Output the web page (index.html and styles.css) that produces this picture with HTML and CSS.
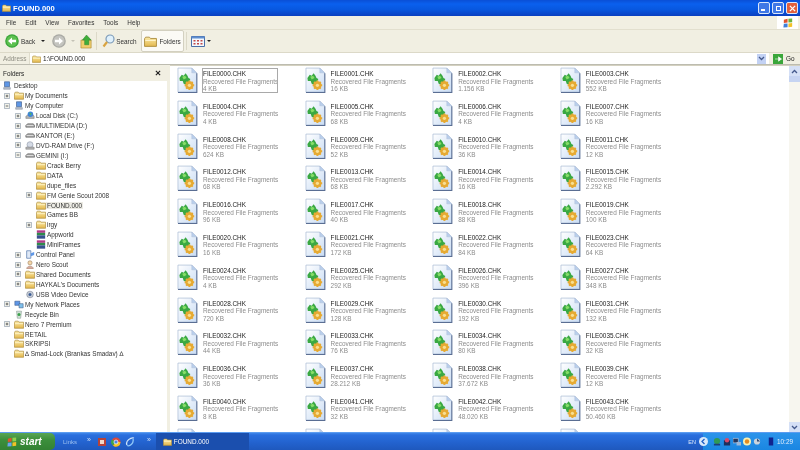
FILE: index.html
```html
<!DOCTYPE html>
<html lang="en">
<head>
<meta charset="utf-8">
<title>FOUND.000</title>
<link rel="stylesheet" href="styles.css">
</head>
<body>
<svg class="defs" width="0" height="0" aria-hidden="true">
  <defs>
    <linearGradient id="pg" x1="0" y1="0" x2="1" y2="1"><stop offset="0" stop-color="#ffffff"/><stop offset="1" stop-color="#c9dcf4"/></linearGradient>
    <linearGradient id="fd" x1="0" y1="0" x2="0" y2="1"><stop offset="0" stop-color="#fbe9a6"/><stop offset="1" stop-color="#e3b84e"/></linearGradient>
    <symbol id="chk" viewBox="0 0 22 27">
      <path d="M1 .5H15.500L20.500 5.500V25.500H1Z" fill="url(#pg)" stroke="#a4b5d0" stroke-width=".7"/>
      <path d="M15.500 .5V5.500H20.500Z" fill="#b9cfec" stroke="#a4b5d0" stroke-width=".4"/>
      <path d="M20.800 6V26H1" fill="none" stroke="#5a6e93" stroke-width="1.100"/>
      <path d="M2.500 11L5 7.500L7 8.500L9 6L11 8.500L12 11L14 12L12.500 15L10 15L9.500 18L7 17L6 14L3 14Z" fill="#3aa843"/>
      <path d="M5.500 9.500L8.500 8.500L10 11L7 12.500Z" fill="#86de68"/>
      <circle cx="13" cy="18.500" r="4.200" fill="#e6aa33"/>
      <path d="M13 13.500V23.500M8 18.500H18M9.500 15L16.500 22M16.500 15L9.500 22" stroke="#e6aa33" stroke-width="2"/>
      <circle cx="13" cy="18.500" r="1.700" fill="#f8df92"/>
    </symbol>
    <symbol id="folder" viewBox="0 0 12 10">
      <path d="M.5 2.500L1.500 1H5L6 2.200H11.500V9.500H.5Z" fill="url(#fd)" stroke="#a98a3a" stroke-width=".8"/>
      <path d="M1.200 4H10.800" stroke="#fff5cc" stroke-width="1"/>
    </symbol>
    <symbol id="drive" viewBox="0 0 12 10">
      <path d="M1 5L3 3H10L11.500 5V7H1Z" fill="#a8a8a8" stroke="#555" stroke-width=".7"/>
      <path d="M2 5H10" stroke="#e4e4e4"/>
    </symbol>
    <symbol id="disc" viewBox="0 0 12 10">
      <circle cx="6" cy="4" r="3.600" fill="#d5dbe6" stroke="#7a8496" stroke-width=".6"/>
      <path d="M1 7H11V9.500H1Z" fill="#b4b4b4" stroke="#666" stroke-width=".5"/>
    </symbol>
    <symbol id="globe" viewBox="0 0 12 10">
      <path d="M1 6L3 4.500H10L11 6V8.500H1Z" fill="#b3b3b3" stroke="#666" stroke-width=".5"/>
      <circle cx="6.500" cy="3.500" r="3.300" fill="#3f86d8"/>
      <path d="M5 1.500L8 2.500L6.500 5Z" fill="#53b85a"/>
    </symbol>
    <symbol id="pc" viewBox="0 0 12 10">
      <path d="M3 .5H9V6.500H3Z" fill="#5f97e6" stroke="#33517f" stroke-width=".7"/>
      <path d="M2 7.500H10V9.500H2Z" fill="#b9c2d0" stroke="#6a7486" stroke-width=".5"/>
    </symbol>
    <symbol id="books" viewBox="0 0 12 10">
      <path d="M1 0H11V3H1Z" fill="#b13a8a"/><path d="M1 3H11V6H1Z" fill="#2f8a4c"/><path d="M1 6H11V10H1Z" fill="#37518f"/>
    </symbol>
    <symbol id="bin" viewBox="0 0 12 10">
      <path d="M3 1H9L8 9.500H4Z" fill="#cfe0d4" stroke="#7d8f86" stroke-width=".6"/><circle cx="6" cy="5" r="1.800" fill="#3aa04a"/>
    </symbol>
    <symbol id="cam" viewBox="0 0 12 10">
      <circle cx="6" cy="5" r="4" fill="#c6ccd6" stroke="#6c7788" stroke-width=".6"/><circle cx="6" cy="5" r="1.800" fill="#3e5f96"/>
    </symbol>
    <symbol id="panel" viewBox="0 0 12 10">
      <path d="M2 .5H7V9.500H2Z" fill="#dfe9f7" stroke="#4a6fa8" stroke-width=".8"/><path d="M7 3.500L11 2V5.500L7 7Z" fill="#5f97e6"/>
    </symbol>
    <symbol id="person" viewBox="0 0 12 10">
      <circle cx="6" cy="3" r="2.500" fill="#f3d6a8" stroke="#8a6a4a" stroke-width=".6"/><path d="M2 10C2 6 10 6 10 10Z" fill="#d9a9a0" stroke="#8a6a4a" stroke-width=".5"/>
    </symbol>
    <symbol id="net" viewBox="0 0 12 10">
      <path d="M1 1H7V6H1Z" fill="#5f97e6" stroke="#33517f" stroke-width=".6"/><path d="M6 4H11V9H6Z" fill="#7fc0ea" stroke="#33517f" stroke-width=".6"/>
    </symbol>
    <symbol id="plus" viewBox="0 0 7 7">
      <path d="M.5 .5H6.500V6.500H.5Z" fill="#f2f2ea" stroke="#a3adb9"/><path d="M2 3.500H5M3.500 2V5" stroke="#444" stroke-width=".9"/>
    </symbol>
    <symbol id="minus" viewBox="0 0 7 7">
      <path d="M.5 .5H6.500V6.500H.5Z" fill="#f2f2ea" stroke="#a3adb9"/><path d="M2 3.500H5" stroke="#444" stroke-width=".9"/>
    </symbol>
  </defs>
</svg>

<div class="window">
  <header class="titlebar">
    <svg class="title-icon"><use href="#folder"/></svg>
    <span class="title-text">FOUND.000</span>
    <div class="winbtns">
      <span class="winbtn"><i class="glyph-min"></i></span>
      <span class="winbtn"><i class="glyph-max"></i></span>
      <span class="winbtn close">
        <svg viewBox="0 0 8 8" class="glyph-x"><path d="M1 1L7 7M7 1L1 7" stroke="#fff" stroke-width="1.500"/></svg>
      </span>
    </div>
  </header>

  <nav class="menubar">
    <span class="menu">File</span><span class="menu">Edit</span><span class="menu">View</span><span class="menu">Favorites</span><span class="menu">Tools</span><span class="menu">Help</span>
    <span class="winflag">
      <svg viewBox="0 0 12 12" class="flag"><path d="M1 2L5.500 1V5.500L1 6Z" fill="#e0532c"/><path d="M6.500 1L11 .5V5L6.500 5.500Z" fill="#6cb33f"/><path d="M1 7L5.500 6.500V11L.5 11.500Z" fill="#3f7fd8"/><path d="M6.500 6.500L11 6V10.500L6.500 11Z" fill="#f2c227"/></svg>
    </span>
  </nav>

  <div class="toolbar">
    <svg viewBox="0 0 14 14" class="tb-round"><circle cx="7" cy="7" r="6.800" fill="#3aa63a"/><circle cx="7" cy="7" r="5.500" fill="#5cc04f"/><path d="M3 7L7 3.500V5.800H11V8.200H7V10.500Z" fill="#fff"/></svg>
    <span class="tb-label back-label">Back</span>
    <i class="caret caret-back"></i>
    <svg viewBox="0 0 14 14" class="tb-round fwd"><circle cx="7" cy="7" r="6.800" fill="#a9a9a4"/><circle cx="7" cy="7" r="5.500" fill="#c4c4bf"/><path d="M11 7L7 3.500V5.800H3V8.200H7V10.500Z" fill="#fff"/></svg>
    <i class="caret caret-fwd"></i>
    <svg viewBox="0 0 14 15" class="tb-up"><path d="M1 6H12V14.500H1Z" fill="#f0cf6c" stroke="#b08d35" stroke-width=".7"/><path d="M7 .5L12 6H9.500V11H5V6H2.500Z" fill="#3fae3a" stroke="#2c7f2a" stroke-width=".5"/></svg>
    <span class="tb-sep sep-a"></span>
    <svg viewBox="0 0 13 14" class="tb-search"><circle cx="8" cy="5" r="4" fill="#dff0fb" stroke="#7d9bb8" stroke-width="1.200"/><path d="M5 8L1.500 12.500" stroke="#d9a441" stroke-width="2.200"/></svg>
    <span class="tb-label search-label">Search</span>
    <div class="folders-btn">
      <svg class="folders-icon"><use href="#folder"/></svg>
      <span class="tb-label">Folders</span>
    </div>
    <span class="tb-sep sep-b"></span>
    <svg viewBox="0 0 14 11" class="tb-views"><path d="M.5 .5H13.500V10.500H.5Z" fill="#f4f8fd" stroke="#4a6fa8"/><path d="M.5 .5H13.500V2.500H.5Z" fill="#5f8fd0"/><path d="M2.500 4H4.500V5.500H2.500ZM6 4H8V5.500H6ZM9.500 4H11.500V5.500H9.500ZM2.500 7H4.500V8.500H2.500ZM6 7H8V8.500H6ZM9.500 7H11.500V8.500H9.500Z" fill="#c24a4a"/></svg>
    <i class="caret caret-views"></i>
  </div>

  <div class="addressbar">
    <span class="addr-label">Address</span>
    <div class="addr-field">
      <svg class="addr-icon"><use href="#folder"/></svg>
      <span class="addr-text">1:\FOUND.000</span>
      <span class="addr-drop"><svg viewBox="0 0 7 5" class="chev"><path d="M1 1L3.500 3.500L6 1" fill="none" stroke="#44598c" stroke-width="1.300"/></svg></span>
    </div>
    <svg viewBox="0 0 10 10" class="go-icon"><path d="M0 0H10V10H0Z" fill="#3aa63a"/><path d="M2 5H5.500V2.800L8.500 5L5.500 7.200V5" fill="#fff" stroke="#fff" stroke-width=".6"/></svg>
    <span class="go-text">Go</span>
  </div>

  <main class="content">
    <aside class="tree">
      <div class="tree-head"><span>Folders</span><svg viewBox="0 0 7 7" class="tree-close"><path d="M1 1L6 6M6 1L1 6" stroke="#222" stroke-width="1.300"/></svg></div>
      <div class="tree-body">
        <div class="node d0"><svg class="ni"><use href="#pc"/></svg><span>Desktop</span></div>
        <div class="node d1"><svg class="ex"><use href="#plus"/></svg><svg class="ni"><use href="#folder"/></svg><span>My Documents</span></div>
        <div class="node d1"><svg class="ex"><use href="#minus"/></svg><svg class="ni"><use href="#pc"/></svg><span>My Computer</span></div>
        <div class="node d2"><svg class="ex"><use href="#plus"/></svg><svg class="ni"><use href="#globe"/></svg><span>Local Disk (C:)</span></div>
        <div class="node d2"><svg class="ex"><use href="#plus"/></svg><svg class="ni"><use href="#drive"/></svg><span>MULTIMEDIA (D:)</span></div>
        <div class="node d2"><svg class="ex"><use href="#plus"/></svg><svg class="ni"><use href="#drive"/></svg><span>KANTOR (E:)</span></div>
        <div class="node d2"><svg class="ex"><use href="#plus"/></svg><svg class="ni"><use href="#disc"/></svg><span>DVD-RAM Drive (F:)</span></div>
        <div class="node d2"><svg class="ex"><use href="#minus"/></svg><svg class="ni"><use href="#drive"/></svg><span>GEMINI (I:)</span></div>
        <div class="node d3"><svg class="ni"><use href="#folder"/></svg><span>Crack Berry</span></div>
        <div class="node d3"><svg class="ni"><use href="#folder"/></svg><span>DATA</span></div>
        <div class="node d3"><svg class="ni"><use href="#folder"/></svg><span>dupe_files</span></div>
        <div class="node d3 has"><svg class="ex"><use href="#plus"/></svg><svg class="ni"><use href="#folder"/></svg><span>FM Genie Scout 2008</span></div>
        <div class="node d3"><svg class="ni"><use href="#folder"/></svg><span class="selected">FOUND.000</span></div>
        <div class="node d3"><svg class="ni"><use href="#folder"/></svg><span>Games BB</span></div>
        <div class="node d3 has"><svg class="ex"><use href="#plus"/></svg><svg class="ni"><use href="#folder"/></svg><span>irgy</span></div>
        <div class="node d3"><svg class="ni"><use href="#books"/></svg><span>Appworld</span></div>
        <div class="node d3"><svg class="ni"><use href="#books"/></svg><span>MiniFrames</span></div>
        <div class="node d2"><svg class="ex"><use href="#plus"/></svg><svg class="ni"><use href="#panel"/></svg><span>Control Panel</span></div>
        <div class="node d2"><svg class="ex"><use href="#plus"/></svg><svg class="ni"><use href="#person"/></svg><span>Nero Scout</span></div>
        <div class="node d2"><svg class="ex"><use href="#plus"/></svg><svg class="ni"><use href="#folder"/></svg><span>Shared Documents</span></div>
        <div class="node d2"><svg class="ex"><use href="#plus"/></svg><svg class="ni"><use href="#folder"/></svg><span>HAYKAL's Documents</span></div>
        <div class="node d3b"><svg class="ni"><use href="#cam"/></svg><span>USB Video Device</span></div>
        <div class="node d1"><svg class="ex"><use href="#plus"/></svg><svg class="ni"><use href="#net"/></svg><span>My Network Places</span></div>
        <div class="node d1b"><svg class="ni"><use href="#bin"/></svg><span>Recycle Bin</span></div>
        <div class="node d1"><svg class="ex"><use href="#plus"/></svg><svg class="ni"><use href="#folder"/></svg><span>Nero 7 Premium</span></div>
        <div class="node d1b"><svg class="ni"><use href="#folder"/></svg><span>RETAIL</span></div>
        <div class="node d1b"><svg class="ni"><use href="#folder"/></svg><span>SKRIPSI</span></div>
        <div class="node d1b"><svg class="ni"><use href="#folder"/></svg><span>∆ Smad-Lock (Brankas Smadav) ∆</span></div>
      </div>
    </aside>
    <div class="splitter"></div>
    <section class="files">
      <div class="file"><svg class="fi"><use href="#chk"/></svg><div class="ft focus"><b>FILE0000.CHK</b><span>Recovered File Fragments</span><span>4 KB</span></div></div>
      <div class="file"><svg class="fi"><use href="#chk"/></svg><div class="ft"><b>FILE0001.CHK</b><span>Recovered File Fragments</span><span>16 KB</span></div></div>
      <div class="file"><svg class="fi"><use href="#chk"/></svg><div class="ft"><b>FILE0002.CHK</b><span>Recovered File Fragments</span><span>1.156 KB</span></div></div>
      <div class="file"><svg class="fi"><use href="#chk"/></svg><div class="ft"><b>FILE0003.CHK</b><span>Recovered File Fragments</span><span>552 KB</span></div></div>
      <div class="file"><svg class="fi"><use href="#chk"/></svg><div class="ft"><b>FILE0004.CHK</b><span>Recovered File Fragments</span><span>4 KB</span></div></div>
      <div class="file"><svg class="fi"><use href="#chk"/></svg><div class="ft"><b>FILE0005.CHK</b><span>Recovered File Fragments</span><span>68 KB</span></div></div>
      <div class="file"><svg class="fi"><use href="#chk"/></svg><div class="ft"><b>FILE0006.CHK</b><span>Recovered File Fragments</span><span>4 KB</span></div></div>
      <div class="file"><svg class="fi"><use href="#chk"/></svg><div class="ft"><b>FILE0007.CHK</b><span>Recovered File Fragments</span><span>16 KB</span></div></div>
      <div class="file"><svg class="fi"><use href="#chk"/></svg><div class="ft"><b>FILE0008.CHK</b><span>Recovered File Fragments</span><span>624 KB</span></div></div>
      <div class="file"><svg class="fi"><use href="#chk"/></svg><div class="ft"><b>FILE0009.CHK</b><span>Recovered File Fragments</span><span>52 KB</span></div></div>
      <div class="file"><svg class="fi"><use href="#chk"/></svg><div class="ft"><b>FILE0010.CHK</b><span>Recovered File Fragments</span><span>36 KB</span></div></div>
      <div class="file"><svg class="fi"><use href="#chk"/></svg><div class="ft"><b>FILE0011.CHK</b><span>Recovered File Fragments</span><span>12 KB</span></div></div>
      <div class="file"><svg class="fi"><use href="#chk"/></svg><div class="ft"><b>FILE0012.CHK</b><span>Recovered File Fragments</span><span>68 KB</span></div></div>
      <div class="file"><svg class="fi"><use href="#chk"/></svg><div class="ft"><b>FILE0013.CHK</b><span>Recovered File Fragments</span><span>68 KB</span></div></div>
      <div class="file"><svg class="fi"><use href="#chk"/></svg><div class="ft"><b>FILE0014.CHK</b><span>Recovered File Fragments</span><span>16 KB</span></div></div>
      <div class="file"><svg class="fi"><use href="#chk"/></svg><div class="ft"><b>FILE0015.CHK</b><span>Recovered File Fragments</span><span>2.292 KB</span></div></div>
      <div class="file"><svg class="fi"><use href="#chk"/></svg><div class="ft"><b>FILE0016.CHK</b><span>Recovered File Fragments</span><span>96 KB</span></div></div>
      <div class="file"><svg class="fi"><use href="#chk"/></svg><div class="ft"><b>FILE0017.CHK</b><span>Recovered File Fragments</span><span>40 KB</span></div></div>
      <div class="file"><svg class="fi"><use href="#chk"/></svg><div class="ft"><b>FILE0018.CHK</b><span>Recovered File Fragments</span><span>88 KB</span></div></div>
      <div class="file"><svg class="fi"><use href="#chk"/></svg><div class="ft"><b>FILE0019.CHK</b><span>Recovered File Fragments</span><span>100 KB</span></div></div>
      <div class="file"><svg class="fi"><use href="#chk"/></svg><div class="ft"><b>FILE0020.CHK</b><span>Recovered File Fragments</span><span>16 KB</span></div></div>
      <div class="file"><svg class="fi"><use href="#chk"/></svg><div class="ft"><b>FILE0021.CHK</b><span>Recovered File Fragments</span><span>172 KB</span></div></div>
      <div class="file"><svg class="fi"><use href="#chk"/></svg><div class="ft"><b>FILE0022.CHK</b><span>Recovered File Fragments</span><span>84 KB</span></div></div>
      <div class="file"><svg class="fi"><use href="#chk"/></svg><div class="ft"><b>FILE0023.CHK</b><span>Recovered File Fragments</span><span>64 KB</span></div></div>
      <div class="file"><svg class="fi"><use href="#chk"/></svg><div class="ft"><b>FILE0024.CHK</b><span>Recovered File Fragments</span><span>4 KB</span></div></div>
      <div class="file"><svg class="fi"><use href="#chk"/></svg><div class="ft"><b>FILE0025.CHK</b><span>Recovered File Fragments</span><span>292 KB</span></div></div>
      <div class="file"><svg class="fi"><use href="#chk"/></svg><div class="ft"><b>FILE0026.CHK</b><span>Recovered File Fragments</span><span>396 KB</span></div></div>
      <div class="file"><svg class="fi"><use href="#chk"/></svg><div class="ft"><b>FILE0027.CHK</b><span>Recovered File Fragments</span><span>348 KB</span></div></div>
      <div class="file"><svg class="fi"><use href="#chk"/></svg><div class="ft"><b>FILE0028.CHK</b><span>Recovered File Fragments</span><span>720 KB</span></div></div>
      <div class="file"><svg class="fi"><use href="#chk"/></svg><div class="ft"><b>FILE0029.CHK</b><span>Recovered File Fragments</span><span>128 KB</span></div></div>
      <div class="file"><svg class="fi"><use href="#chk"/></svg><div class="ft"><b>FILE0030.CHK</b><span>Recovered File Fragments</span><span>192 KB</span></div></div>
      <div class="file"><svg class="fi"><use href="#chk"/></svg><div class="ft"><b>FILE0031.CHK</b><span>Recovered File Fragments</span><span>132 KB</span></div></div>
      <div class="file"><svg class="fi"><use href="#chk"/></svg><div class="ft"><b>FILE0032.CHK</b><span>Recovered File Fragments</span><span>44 KB</span></div></div>
      <div class="file"><svg class="fi"><use href="#chk"/></svg><div class="ft"><b>FILE0033.CHK</b><span>Recovered File Fragments</span><span>76 KB</span></div></div>
      <div class="file"><svg class="fi"><use href="#chk"/></svg><div class="ft"><b>FILE0034.CHK</b><span>Recovered File Fragments</span><span>80 KB</span></div></div>
      <div class="file"><svg class="fi"><use href="#chk"/></svg><div class="ft"><b>FILE0035.CHK</b><span>Recovered File Fragments</span><span>32 KB</span></div></div>
      <div class="file"><svg class="fi"><use href="#chk"/></svg><div class="ft"><b>FILE0036.CHK</b><span>Recovered File Fragments</span><span>36 KB</span></div></div>
      <div class="file"><svg class="fi"><use href="#chk"/></svg><div class="ft"><b>FILE0037.CHK</b><span>Recovered File Fragments</span><span>28.212 KB</span></div></div>
      <div class="file"><svg class="fi"><use href="#chk"/></svg><div class="ft"><b>FILE0038.CHK</b><span>Recovered File Fragments</span><span>37.672 KB</span></div></div>
      <div class="file"><svg class="fi"><use href="#chk"/></svg><div class="ft"><b>FILE0039.CHK</b><span>Recovered File Fragments</span><span>12 KB</span></div></div>
      <div class="file"><svg class="fi"><use href="#chk"/></svg><div class="ft"><b>FILE0040.CHK</b><span>Recovered File Fragments</span><span>8 KB</span></div></div>
      <div class="file"><svg class="fi"><use href="#chk"/></svg><div class="ft"><b>FILE0041.CHK</b><span>Recovered File Fragments</span><span>32 KB</span></div></div>
      <div class="file"><svg class="fi"><use href="#chk"/></svg><div class="ft"><b>FILE0042.CHK</b><span>Recovered File Fragments</span><span>48.020 KB</span></div></div>
      <div class="file"><svg class="fi"><use href="#chk"/></svg><div class="ft"><b>FILE0043.CHK</b><span>Recovered File Fragments</span><span>50.460 KB</span></div></div>
      <div class="file"><svg class="fi"><use href="#chk"/></svg><div class="ft"><b>FILE0044.CHK</b></div></div>
      <div class="file"><svg class="fi"><use href="#chk"/></svg><div class="ft"><b>FILE0045.CHK</b></div></div>
      <div class="file"><svg class="fi"><use href="#chk"/></svg><div class="ft"><b>FILE0046.CHK</b></div></div>
      <div class="file"><svg class="fi"><use href="#chk"/></svg><div class="ft"><b>FILE0047.CHK</b></div></div>
    </section>
    <div class="scrollbar">
      <span class="sb-btn"><svg viewBox="0 0 7 5" class="chev"><path d="M1 4L3.500 1.500L6 4" fill="none" stroke="#44598c" stroke-width="1.300"/></svg></span>
      <span class="sb-thumb"></span>
      <span class="sb-track"></span>
      <span class="sb-btn"><svg viewBox="0 0 7 5" class="chev"><path d="M1 1L3.500 3.500L6 1" fill="none" stroke="#44598c" stroke-width="1.300"/></svg></span>
    </div>
  </main>

  <footer class="taskbar">
    <div class="start">
      <svg viewBox="0 0 12 12" class="start-flag"><path d="M1 2L5.500 1V5.500L1 6Z" fill="#e0532c"/><path d="M6.500 1L11 .5V5L6.500 5.500Z" fill="#8fd04f"/><path d="M1 7L5.500 6.500V11L.5 11.500Z" fill="#6aa5ee"/><path d="M6.500 6.500L11 6V10.500L6.500 11Z" fill="#f2c227"/></svg>
      <span class="start-text">start</span>
    </div>
    <span class="links">Links</span>
    <span class="chevrons chev-a">»</span>
    <div class="quick">
      <svg viewBox="0 0 10 10" class="q"><path d="M1 1H9V9H1Z" fill="#b5433a"/><path d="M3 3H7V7H3Z" fill="#f0d8c8"/></svg>
      <svg viewBox="0 0 10 10" class="q"><circle cx="5" cy="5" r="4.500" fill="#d9483b"/><path d="M5 5L9.500 5A4.500 4.500 0 0 1 2 8.500Z" fill="#f2c227"/><path d="M5 5L2 8.500A4.500 4.500 0 0 1 1 2.500Z" fill="#3fa64a"/><circle cx="5" cy="5" r="2" fill="#4a86e8" stroke="#fff" stroke-width=".7"/></svg>
      <svg viewBox="0 0 10 10" class="q"><path d="M2 8C0 4 6 0 9 1" fill="none" stroke="#cfe6fb" stroke-width="1.300"/><path d="M8 2C9 6 5 10 2 8.500" fill="none" stroke="#8fc8f8" stroke-width="1.300"/></svg>
    </div>
    <span class="chevrons chev-b">»</span>
    <div class="task">
      <svg class="task-icon"><use href="#folder"/></svg>
      <span>FOUND.000</span>
    </div>
    <span class="lang">EN</span>
    <div class="tray">
      <svg viewBox="0 0 9 9" class="tray-chev"><circle cx="4.500" cy="4.500" r="4.500" fill="#d8e9fb"/><path d="M5.500 2L3 4.500L5.500 7" fill="none" stroke="#1f5fc4" stroke-width="1.300"/></svg>
      <svg viewBox="0 0 9 9" class="ti"><circle cx="4.500" cy="4" r="3.500" fill="#2f9a55"/><path d="M1 7H8V9H1Z" fill="#1d3f7a"/></svg>
      <svg viewBox="0 0 9 9" class="ti"><path d="M1 3H8V9H1Z" fill="#1d2f5f"/><circle cx="4.500" cy="3" r="2.500" fill="#d6476a"/></svg>
      <svg viewBox="0 0 9 9" class="ti"><path d="M0 1H6V6H0Z" fill="#23375f" stroke="#dfe9f5" stroke-width=".6"/><path d="M4 5H9V9H4Z" fill="#9db7d8"/></svg>
      <svg viewBox="0 0 9 9" class="ti"><circle cx="4.500" cy="4.500" r="4.500" fill="#f7f1b4"/><circle cx="4.500" cy="4.500" r="2.500" fill="#e58b1f"/></svg>
      <svg viewBox="0 0 9 9" class="ti"><circle cx="4.500" cy="4.500" r="3.500" fill="#c9d3dd"/><path d="M4.500 1V4.500H8" fill="#2f4a75"/></svg>
      <svg viewBox="0 0 9 9" class="ti usb"><path d="M2 0H7V9H2Z" fill="#10238f"/></svg>
      <span class="clock">10:29</span>
    </div>
  </footer>
</div>
</body>
</html>
```
FILE: styles.css
```css
* { box-sizing: border-box; }
html, body { margin: 0; height: 100%; overflow: hidden; }
body { font-family: "Liberation Sans", Arial, sans-serif; font-size: 6.4px; color: #222; background: #fff; }
.defs { display: block; height: 0; }
.window { width: 800px; height: 450px; display: flex; flex-direction: column; overflow: hidden; filter: blur(.3px); }

.titlebar { height: 16px; flex: none; display: flex; align-items: center; padding: 0 2px; background: linear-gradient(#0a4fd6 0, #0a60ee 25%, #0857df 60%, #0a3fc0 100%); color: #fff; }
.title-icon { width: 9px; height: 8px; margin-right: 2px; }
.title-text { font-size: 7.6px; font-weight: bold; }
.winbtns { margin-left: auto; display: flex; gap: 2px; }
.winbtn { width: 12px; height: 12px; border: 1px solid #d9e6fa; border-radius: 2px; background: #3f78e6; display: flex; align-items: center; justify-content: center; }
.winbtn.close { background: #e0603c; }
.glyph-min { width: 4px; height: 1.5px; background: #fff; margin-top: 4px; margin-right: 2px; }
.glyph-max { width: 5px; height: 5px; border: 1px solid #fff; }
.glyph-x { width: 7px; height: 7px; }

.menubar { height: 14px; flex: none; display: flex; align-items: center; padding-left: 6px; gap: 9px; background: #f1efe2; border-bottom: 1px solid #e2dfce; color: #333; }
.winflag { margin-left: auto; width: 21px; height: 13px; background: #fff; margin-right: 2px; display: flex; align-items: center; justify-content: center; }
.flag { width: 10px; height: 10px; }

.toolbar { height: 23px; flex: none; display: flex; align-items: center; padding-left: 5px; background: #f1efe2; border-bottom: 1px solid #dcd9c8; }
.tb-round { width: 14px; height: 14px; }
.tb-label { color: #333; }
.back-label { margin-left: 2px; }
.caret { width: 0; height: 0; border-left: 2px solid transparent; border-right: 2px solid transparent; border-top: 2.5px solid #222; }
.caret-back { margin-left: 6px; }
.fwd { margin-left: 7px; }
.caret-fwd { margin-left: 5px; border-top-color: #c4c2b6; }
.tb-up { width: 13px; height: 15px; margin-left: 5px; }
.tb-sep { width: 1px; height: 18px; background: #dcd9c8; }
.sep-a { margin-left: 3px; }
.tb-search { width: 13px; height: 14px; margin-left: 5px; }
.search-label { margin-left: 1px; }
.folders-btn { margin-left: 5px; width: 43px; height: 22px; background: #fbfaf5; border: 1px solid #d3d0c0; border-radius: 2px; display: flex; align-items: center; padding-left: 2px; gap: 2px; }
.folders-icon { width: 13px; height: 11px; }
.sep-b { margin-left: 2px; }
.tb-views { width: 14px; height: 11px; margin-left: 4px; }
.caret-views { margin-left: 2px; }

.addressbar { height: 12px; flex: none; display: flex; align-items: center; background: #f1efe2; border-bottom: 1px solid #bdbcb0; padding-left: 3px; }
.addr-label { width: 26px; color: #8e8d82; }
.addr-field { flex: 1; height: 11px; background: #fff; display: flex; align-items: center; padding-left: 2px; border-left: 1px solid #dfdccc; }
.addr-icon { width: 9px; height: 8px; margin-right: 2px; }
.addr-drop { margin-left: auto; width: 9px; height: 10px; background: #c3d2f4; margin-right: 3px; display: flex; align-items: center; justify-content: center; }
.chev { width: 7px; height: 5px; }
.go-icon { width: 10px; height: 10px; margin-left: 4px; }
.go-text { width: 17px; padding-left: 3px; }

.content { flex: 1; min-height: 0; display: flex; background: #fff; overflow: hidden; }
.tree { width: 167px; flex: none; display: flex; flex-direction: column; overflow: hidden; }
.tree-head { height: 16px; flex: none; display: flex; align-items: center; justify-content: space-between; padding: 0 6px 0 3px; background: #f1efe2; }
.tree-close { width: 6px; height: 6px; }
.tree-body { flex: 1; display: flex; flex-direction: column; }
.node { height: 9.93px; flex: none; display: flex; align-items: center; white-space: nowrap; color: #333; }
.ex { width: 6px; height: 6px; flex: none; margin-right: 3px; }
.ni { width: 10px; height: 9px; flex: none; margin-right: 1px; }
.d0 { padding-left: 2px; }
.d0 .ni { margin-right: 2px; }
.d1 { padding-left: 4px; }
.d1 .ni { margin-left: 1px; }
.d1b { padding-left: 14px; }
.d2 { padding-left: 15px; }
.d2 .ni { margin-left: 1px; }
.d3 { padding-left: 36px; }
.d3.has { padding-left: 26px; }
.d3.has .ex { margin-right: 4px; }
.d3b { padding-left: 25px; }
.selected { background: #ecebe4; padding: 0 1px; margin-left: -1px; }

.splitter { width: 3px; flex: none; background: #f1efe2; }
.files { flex: 1; min-width: 0; overflow: hidden; padding: 1px 0 0 7px; display: grid; grid-template-columns: repeat(4, 127.6px); grid-auto-rows: 32.8px; align-content: start; background: #fff; border-top: 1px solid #d4d1c0; }
.file { display: flex; align-items: flex-start; gap: 5px; }
.fi { width: 21px; height: 27px; flex: none; }
.ft { width: 74px; height: 23px; margin-top: 2px; padding-top: 1px; display: flex; flex-direction: column; font-size: 6.4px; line-height: 7.5px; white-space: nowrap; color: #8c8c8c; }
.ft b { font-weight: normal; color: #222; }
.focus { outline: 1px solid #a9a9a9; }

.scrollbar { width: 11px; flex: none; display: flex; flex-direction: column; background: #f7f6ef; border-top: 1px solid #d4d1c0; }
.sb-btn { height: 10px; flex: none; background: #d5e0f6; display: flex; align-items: center; justify-content: center; }
.sb-thumb { height: 6px; flex: none; background: #c6d4f2; }
.sb-track { flex: 1; }

.taskbar { height: 18px; flex: none; display: flex; align-items: center; background: linear-gradient(#3f86e8 0, #2a6fde 12%, #2363cf 55%, #1f58bd 100%); color: #fff; border-top: 1px solid #5b9cf0; }
.start { width: 55px; height: 100%; display: flex; align-items: center; padding-left: 7px; gap: 3px; background: linear-gradient(#58a555, #3c8f3c 40%, #338233); border-radius: 0 5px 5px 0; }
.start-flag { width: 10px; height: 10px; }
.start-text { font-size: 10px; font-style: italic; font-weight: bold; }
.links { margin-left: 8px; font-size: 6px; color: #9cc0f0; }
.chevrons { font-size: 7px; color: #cfe0f8; margin-top: -5px; }
.chev-a { margin-left: 10px; }
.quick { margin-left: 6px; display: flex; gap: 4px; }
.q { width: 10px; height: 10px; }
.chev-b { margin-left: 12px; }
.task { margin-left: 5px; width: 93px; height: 100%; background: #1b4fae; display: flex; align-items: center; padding-left: 7px; gap: 2px; }
.task-icon { width: 9px; height: 8px; }
.lang { margin-left: auto; font-size: 5.5px; margin-right: 7px; color: #dbe8fb; }
.tray { width: 97px; height: 100%; background: linear-gradient(#2c94ea, #1a86e2); display: flex; align-items: center; gap: 2px; }
.tray-chev { width: 9px; height: 9px; margin: 0 3px 0 -4px; flex: none; }
.ti { width: 8px; height: 9px; flex: none; }
.usb { margin-left: 4px; }
.clock { margin-left: auto; margin-right: 8px; color: #e6f0fd; }
```
